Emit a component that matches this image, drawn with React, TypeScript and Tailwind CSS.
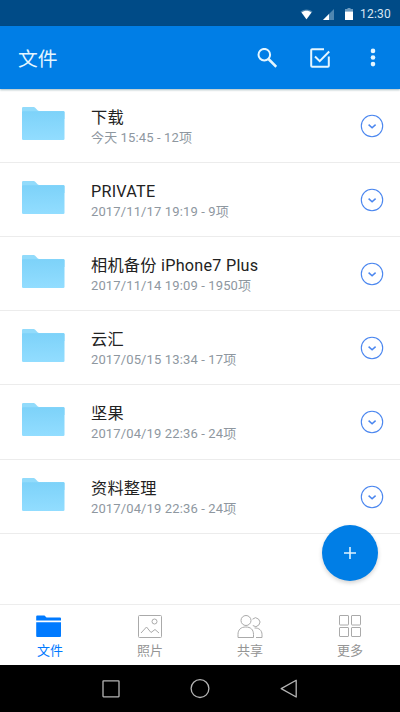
import type { ReactNode } from "react";

interface FolderItem {
  name: string;
  detail: string;
}

interface TabProps {
  label: string;
  active?: boolean;
  children: ReactNode;
}

const folders: FolderItem[] = [
  { name: "下载", detail: "今天 15:45 - 12项" },
  { name: "PRIVATE", detail: "2017/11/17 19:19 - 9项" },
  { name: "相机备份 iPhone7 Plus", detail: "2017/11/14 19:09 - 1950项" },
  { name: "云汇", detail: "2017/05/15 13:34 - 17项" },
  { name: "坚果", detail: "2017/04/19 22:36 - 24项" },
  { name: "资料整理", detail: "2017/04/19 22:36 - 24项" },
];

function StatusBar() {
  return (
    <div className="flex h-[26px] shrink-0 items-center justify-end bg-[#004b87] pr-[9px] pt-[2px] text-white">
      <svg width="13" height="11" viewBox="0 0 13 11" className="mr-[10px]">
        <path d="M0.5 2.6C4 -0.2 9 -0.2 12.5 2.6L6.5 10.5z" fill="#4f86b0" />
        <path d="M1.6 3.4C4.5 1.2 8.5 1.2 11.4 3.4L6.5 10.2z" fill="#fff" />
      </svg>
      <svg width="11" height="11" viewBox="0 0 11 11" className="mr-[11px]">
        <path d="M11 0v11H0z" fill="#4f86b0" />
        <path d="M6 5v6H0z" fill="#fff" />
      </svg>
      <svg width="8" height="12" viewBox="0 0 8 12" className="mr-[7px]">
        <path d="M2.5 0h3v1H8v3H0V1h2.5z" fill="#6d9bc0" />
        <path d="M0 3.6h8V12H0z" fill="#fff" />
      </svg>
      <span className="text-[12px] leading-none tracking-[0.2px] text-[#d7e6f3]">12:30</span>
    </div>
  );
}

function Header() {
  return (
    <header className="relative z-10 flex h-[63px] shrink-0 items-center bg-[#007ee6] pl-[18px] pr-[24px] text-[#e4f6ff] shadow-[0_1px_2px_rgba(0,60,70,0.35)]">
      <h1 className="flex-1 pt-[4px] text-[19.8px] leading-none">文件</h1>
      <svg width="20" height="20" viewBox="0 0 20 20" fill="none" stroke="currentColor" className="mr-[33px]">
        <circle cx="7.3" cy="6.7" r="5.8" strokeWidth="2" />
        <path d="M11.5 11L19.3 18.8" strokeWidth="2.6" />
      </svg>
      <svg width="20" height="20" viewBox="0 0 20 20" fill="none" stroke="currentColor" strokeWidth="2" className="mr-[40px]">
        <path d="M14 1.2H2.2a1 1 0 0 0-1 1v15.6a1 1 0 0 0 1 1h15.6a1 1 0 0 0 1-1V8.5" />
        <path d="M5 8.5l4.7 4.7L19.2 3.5" />
      </svg>
      <svg width="6" height="19" viewBox="0 0 6 19" fill="currentColor">
        <circle cx="3" cy="2.9" r="2.3" />
        <circle cx="3" cy="9.5" r="2.3" />
        <circle cx="3" cy="16.1" r="2.3" />
      </svg>
    </header>
  );
}

function FolderIcon() {
  return (
    <svg width="43" height="34" viewBox="0 0 43 34">
      <defs>
        <linearGradient id="folder" x1="0" y1="0" x2="0" y2="1">
          <stop offset="0" stopColor="#7dd2f9" />
          <stop offset="1" stopColor="#92ddff" />
        </linearGradient>
      </defs>
      <path d="M0 1.2Q0 0 1.2 0H11.5Q12.5 0 13.2 0.7L15.5 3.3Q16.2 4 17.2 4H41.3Q42.5 4 42.5 5.2V12H0z" fill="#92dbfb" />
      <path d="M0 5.2Q0 4.2 1.2 4.2H41.3Q42.5 4.2 42.5 5.4V31.8Q42.5 33 41.3 33H1.2Q0 33 0 31.8z" fill="url(#folder)" />
    </svg>
  );
}

function FolderRow({ name, detail }: FolderItem) {
  return (
    <li className="flex h-[74.12px] border-b border-[#ececec] pl-[22px] pr-4">
      <div className="w-[69px] pt-[18px]">
        <FolderIcon />
      </div>
      <div className="flex-1 pt-[18px]">
        <p className="text-[16.2px] leading-[21px] tracking-[0.25px] text-[#222]">{name}</p>
        <p className="text-[13px] leading-[20px] tracking-[0.13px] text-[#8e979f]">{detail}</p>
      </div>
      <svg width="24" height="24" viewBox="0 0 24 24" fill="none" stroke="#4a86ef" className="mt-[25px]">
        <circle cx="12" cy="12" r="10.7" strokeWidth="1.1" />
        <path d="M8.6 10.6L12.1 13.7L15.6 10.6" strokeWidth="1.5" />
      </svg>
    </li>
  );
}

function Tab({ label, active, children }: TabProps) {
  return (
    <div className={`flex flex-1 flex-col items-center pt-[9px] ${active ? "text-[#007aff]" : "text-[#959595]"}`}>
      <svg width="26" height="26" viewBox="0 0 26 26" fill="none" stroke="#aaa" className="overflow-visible">
        {children}
      </svg>
      <span className="mt-[4px] text-[13px] leading-[14px]">{label}</span>
    </div>
  );
}

function TabBar() {
  return (
    <nav className="flex h-[61px] shrink-0 border-t border-[#ededed] bg-white">
      <Tab label="文件" active>
        <path d="M-0.8 2.5Q-0.8 1.5 0.2 1.5H7.5L9.500 3.500H23Q24 3.500 24 4.500V6.500H-0.8z" fill="#007aff" stroke="none" />
        <path d="M-0.8 8.200H24V22Q24 23 23 23H0.2Q-0.8 23 -0.8 22z" fill="#007aff" stroke="none" />
      </Tab>
      <Tab label="照片">
        <rect x="1.5" y="1.5" width="23" height="22" rx="1" />
        <circle cx="17.5" cy="7.5" r="2.5" />
        <path d="M4 19L9.5 13L14 18.5L18 15.5L22 19" />
      </Tab>
      <Tab label="共享">
        <circle cx="9" cy="6.5" r="5" />
        <path d="M1 23.5V20.5C1 15.5 4 13 8.800 13S16.500 15.5 16.500 20.5V23.5z" />
        <path d="M15.5 5.2A4.3 4.3 0 1 1 15.8 11.5" />
        <path d="M17.5 14C22 13.7 25 16.5 25 20.5V23.5H19" />
      </Tab>
      <Tab label="更多">
        <rect x="2.5" y="1.5" width="9" height="9.5" rx="0.5" />
        <rect x="14.5" y="1.5" width="9" height="9.5" rx="0.5" />
        <rect x="2.5" y="13.5" width="9" height="9" rx="0.5" />
        <rect x="14.5" y="13.5" width="9" height="9" rx="0.5" />
      </Tab>
    </nav>
  );
}

function AndroidNav() {
  return (
    <div className="flex h-[47px] shrink-0 items-center justify-center gap-[69px] bg-black">
      <svg width="20" height="20" viewBox="0 0 20 20" fill="none" stroke="#b5b5b5" strokeWidth="1.3">
        <rect x="2" y="1.8" width="16" height="16" rx="0.5" />
      </svg>
      <svg width="20" height="20" viewBox="0 0 20 20" fill="none" stroke="#b5b5b5" strokeWidth="1.3">
        <circle cx="10" cy="9.6" r="8.9" />
      </svg>
      <svg width="20" height="20" viewBox="0 0 20 20" fill="none" stroke="#b5b5b5" strokeWidth="1.3" strokeLinejoin="round">
        <path d="M17.2 1.2V18L2.2 9.6z" />
      </svg>
    </div>
  );
}

export default function App() {
  return (
    <div className="relative flex h-[712px] w-[400px] flex-col overflow-hidden bg-white font-[Roboto,'Noto_Sans_CJK_SC',sans-serif]">
      <StatusBar />
      <Header />
      <ul className="flex-1">
        {folders.map((folder) => (
          <FolderRow key={folder.name} {...folder} />
        ))}
      </ul>
      <TabBar />
      <AndroidNav />
      <button
        aria-label="新建"
        className="absolute bottom-[131px] right-[22px] flex size-14 items-center justify-center rounded-full bg-[#007ee6] shadow-[0_2px_4px_rgba(0,0,0,0.18)]"
      >
        <svg width="14" height="14" viewBox="0 0 14 14" stroke="#dff3ff" strokeWidth="1.6">
          <path d="M7 1v12M1 7h12" />
        </svg>
      </button>
    </div>
  );
}
